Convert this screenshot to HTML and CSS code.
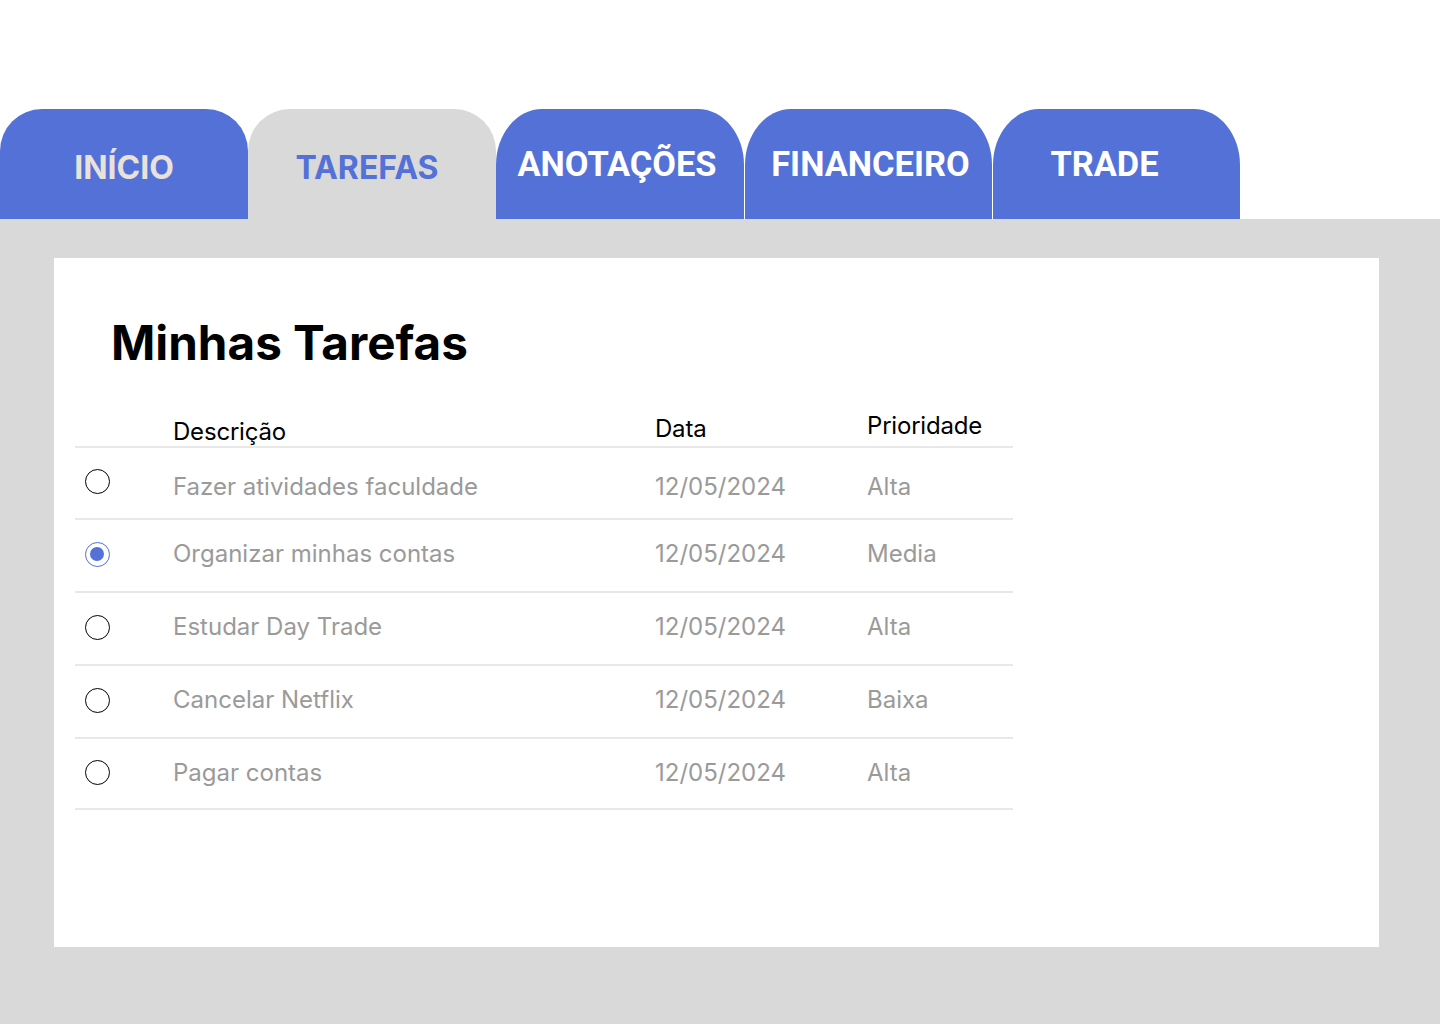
FILE: index.html
```html
<!DOCTYPE html>
<html lang="pt-BR">
<head>
<meta charset="utf-8">
<title>Minhas Tarefas</title>
<link rel="stylesheet" href="styles.css">
</head>
<body>
<nav class="tabs">
  <div class="tab tab-inicio">INÍCIO</div>
  <div class="tab tab-active">TAREFAS</div>
  <div class="tab tab-alt tab-anot">ANOTAÇÕES</div>
  <div class="tab tab-alt tab-sep tab-fin">FINANCEIRO</div>
  <div class="tab tab-alt tab-sep tab-trade">TRADE</div>
</nav>
<main class="stage">
  <section class="card">
    <h1 class="title">Minhas Tarefas</h1>
    <div class="table">
      <div class="row head">
        <div class="cell"></div>
        <div class="cell h-desc">Descrição</div>
        <div class="cell h-data">Data</div>
        <div class="cell h-prio">Prioridade</div>
      </div>
      <div class="row item first">
        <div class="cell"><span class="radio"></span></div>
        <div class="cell">Fazer atividades faculdade</div>
        <div class="cell">12/05/2024</div>
        <div class="cell">Alta</div>
      </div>
      <div class="row item">
        <div class="cell"><span class="radio checked"></span></div>
        <div class="cell">Organizar minhas contas</div>
        <div class="cell">12/05/2024</div>
        <div class="cell">Media</div>
      </div>
      <div class="row item">
        <div class="cell"><span class="radio"></span></div>
        <div class="cell">Estudar Day Trade</div>
        <div class="cell">12/05/2024</div>
        <div class="cell">Alta</div>
      </div>
      <div class="row item">
        <div class="cell"><span class="radio"></span></div>
        <div class="cell">Cancelar Netflix</div>
        <div class="cell">12/05/2024</div>
        <div class="cell">Baixa</div>
      </div>
      <div class="row item last">
        <div class="cell"><span class="radio"></span></div>
        <div class="cell">Pagar contas</div>
        <div class="cell">12/05/2024</div>
        <div class="cell">Alta</div>
      </div>
    </div>
  </section>
</main>
</body>
</html>
```

FILE: styles.css
```css
* { box-sizing: border-box; }
html, body { margin: 0; padding: 0; }
body {
  background: #ffffff;
  font-family: Inter, "Noto Sans", sans-serif;
  width: 1440px;
  height: 1024px;
  overflow: hidden;
}

.tabs {
  display: flex;
  padding-top: 109px;
  height: 219px;
}
.tab {
  width: 248px;
  height: 110px;
  background: #5471d8;
  border-radius: 42px 42px 0 0;
  display: flex;
  align-items: center;
  justify-content: center;
  font-weight: 700;
  font-size: 32px;
  letter-spacing: 0;
  padding-top: 6px;
}
.tab-inicio { color: #e8e2da; }
.tab-active { background: #d9d9d9; color: #5471d8; padding-right: 10px; }
.tab-alt {
  font-family: Roboto, "Liberation Sans", sans-serif;
  font-size: 34.4px;
  color: #ffffff;
  border-radius: 46px 46px 0 0 / 56px 56px 0 0;
  padding-top: 0;
}
.tab-anot { padding-right: 6px; }
.tab-sep { width: 247px; margin-left: 1px; }
.tab-fin { padding-left: 4px; }
.tab-trade { padding-right: 24px; }

.stage {
  background: #d9d9d9;
  height: 805px;
  padding: 39px 0 0 54px;
}
.card {
  width: 1325px;
  height: 689px;
  background: #ffffff;
  padding: 60px 0 0 21px;
}
.title {
  margin: 0 0 0 36px;
  font-size: 47.6px;
  line-height: 50px;
  font-weight: 700;
  color: #000000;
  height: 50px;
}
.table {
  margin-top: 40px;
  width: 938px;
}
.row {
  display: grid;
  grid-template-columns: 98px 482px 212px 146px;
  border-bottom: 2px solid #e8e8e8;
}
.head {
  height: 40px;
  align-items: end;
  font-size: 24px;
  line-height: 24px;
  color: #000000;
  letter-spacing: -0.2px;
}
.h-desc { padding-bottom: 2px; }
.h-data { padding-bottom: 5px; }
.h-prio { padding-bottom: 8px; }

.item {
  height: 73px;
  align-items: center;
  padding-bottom: 3px;
  font-size: 24px;
  line-height: 24px;
  color: #9a9a9a;
  letter-spacing: 0;
}
.item.first { height: 72px; padding-bottom: 0; padding-top: 8px; }
.item.last { height: 71px; padding-bottom: 2px; padding-top: 0; }

.radio {
  display: block;
  width: 25px;
  height: 25px;
  margin-left: 10px;
  border: 1.3px solid #000000;
  border-radius: 50%;
  position: relative;
}
.item.first .radio { margin-top: -12px; }
.radio.checked { border-color: #5471d8; }
.radio.checked::after {
  content: "";
  position: absolute;
  left: 4px;
  top: 4px;
  width: 14.4px;
  height: 14.4px;
  border-radius: 50%;
  background: #5471d8;
}
```
